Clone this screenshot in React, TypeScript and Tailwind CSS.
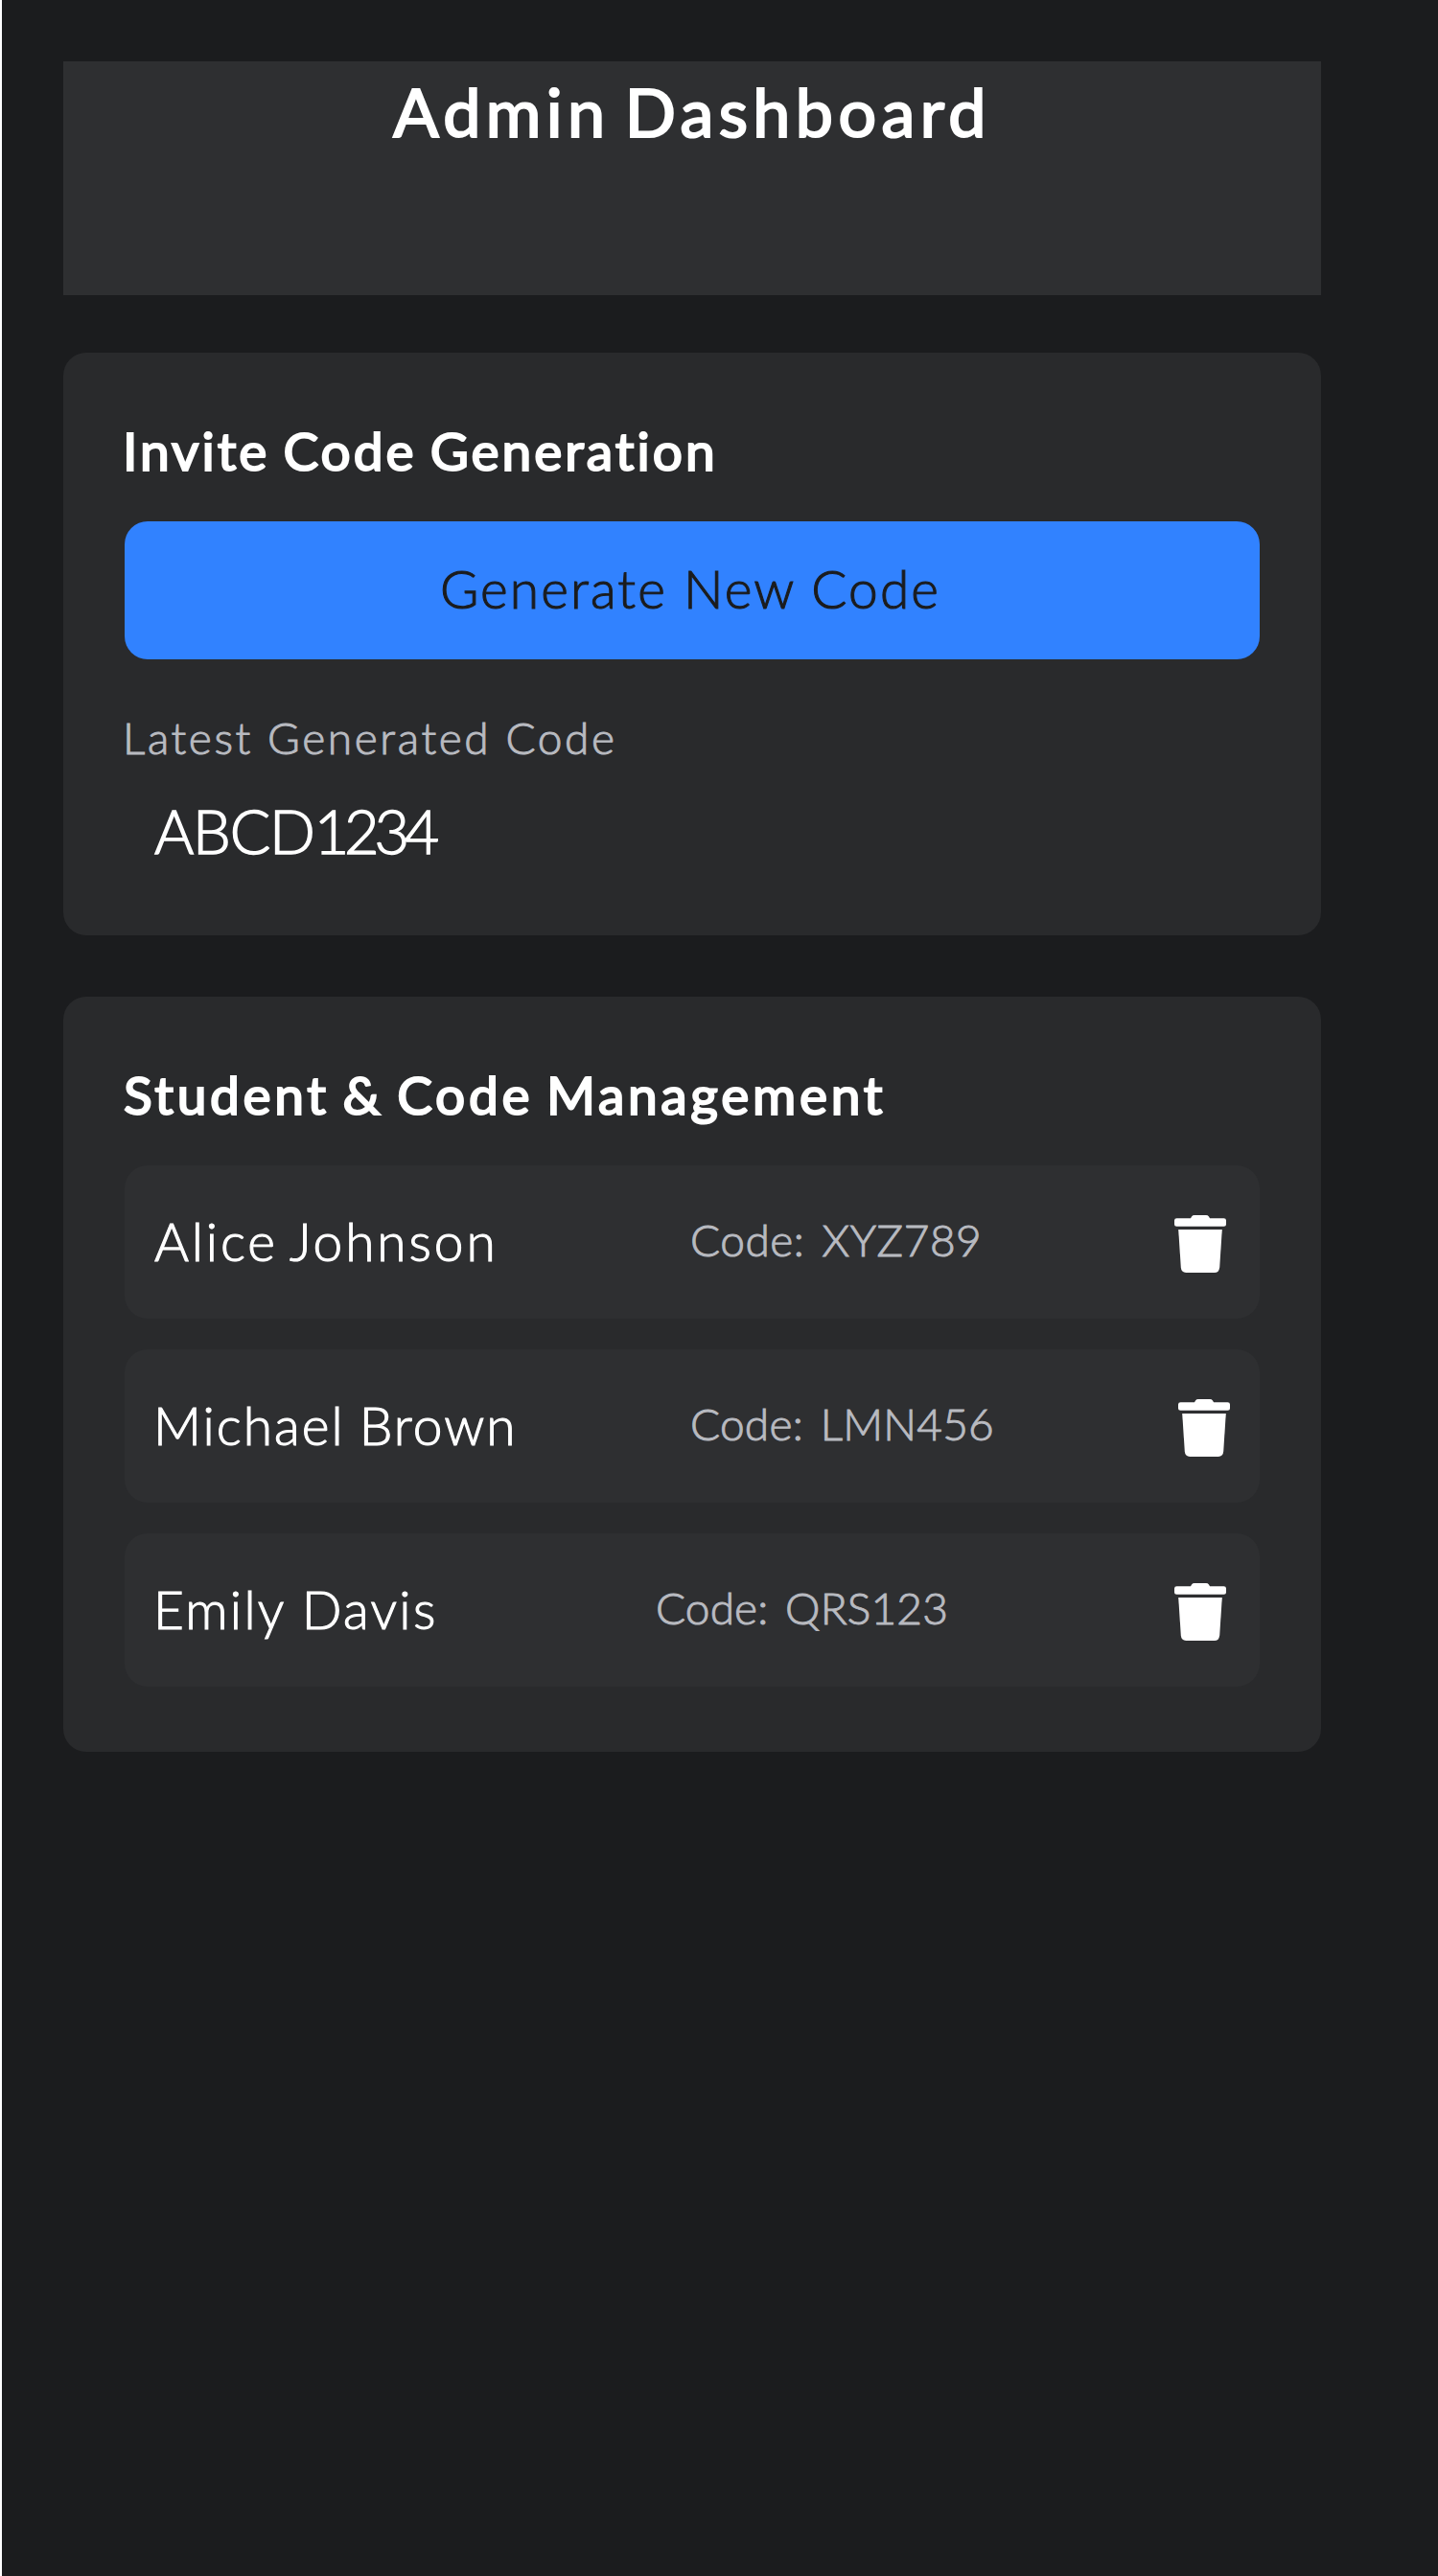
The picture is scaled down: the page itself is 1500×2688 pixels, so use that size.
const students = [
  {
    name: "Alice Johnson",
    code: "Code: XYZ789",
    nameClass: "w-[558px] tracking-[2.9px] [word-spacing:-4px] -indent-px",
    codeClass: "tracking-[0.55px]",
    iconClass: "mr-[3px]",
  },
  {
    name: "Michael Brown",
    code: "Code: LMN456",
    nameClass: "w-[558px] tracking-[2.05px] [word-spacing:-2px] -indent-[2px]",
    codeClass: "tracking-[0.25px]",
    iconClass: "-mr-px",
  },
  {
    name: "Emily Davis",
    code: "Code: QRS123",
    nameClass: "w-[522px] tracking-[2.31px] -indent-[2px]",
    codeClass: "tracking-[0.15px]",
    iconClass: "mr-[3px]",
  },
];

function TrashIcon({ className }: { className: string }) {
  return (
    <svg viewBox="0 0 54 60" className={`h-[60px] w-[54px] ${className}`} fill="currentColor">
      <path d="M17 3.2 L18 1.4 Q19 0 21 0 H33 Q35 0 36 1.4 L37 3.2 H51.5 Q54 3.2 54 5.5 V9.2 Q54 11.7 51.5 11.7 H2.5 Q0 11.7 0 9.2 V5.5 Q0 3.2 2.5 3.2 Z" />
      <path d="M4.2 15 H49.8 L47.2 54.6 Q46.8 60 41.8 60 H12.2 Q7.2 60 6.8 54.6 Z" />
    </svg>
  );
}

function SectionTitle({ className, children }: { className: string; children: string }) {
  return (
    <h2
      className={`mb-9 whitespace-nowrap text-[55px] leading-[76px] font-normal text-white [-webkit-text-stroke:2.1px_currentColor] ${className}`}
    >
      {children}
    </h2>
  );
}

export default function App() {
  return (
    <main className="h-[2688px] w-[1500px] border-l-2 border-white bg-[#1b1c1e] pt-16 pl-16 font-[Lato,sans-serif] font-light text-white">
      <div className="flex w-[1312px] flex-col">
        <header className="h-[244px] bg-[#2e2f31] pt-2 text-center">
          <h1 className="text-[70px] leading-[88px] font-normal tracking-[5.4px] [word-spacing:-8px] [-webkit-text-stroke:2.2px_currentColor]">
            Admin Dashboard
          </h1>
        </header>

        <section className="mt-[60px] h-[608px] rounded-3xl bg-[#292a2c] p-16">
          <SectionTitle className="-ml-[2px] tracking-[3px] [word-spacing:-3px]">
            Invite Code Generation
          </SectionTitle>
          <button className="flex h-36 w-full items-center justify-center rounded-3xl bg-[#3182ff] pr-1 pb-[3px] text-[55px] font-light tracking-[2.09px] text-[#1b1c1e] [-webkit-text-stroke:1.1px_currentColor]">
            Generate New Code
          </button>
          <p className="mt-[52px] -ml-[2px] text-[46px] leading-[60px] tracking-[2.62px] text-[#b8bac0] [-webkit-text-stroke:1px_currentColor]">
            Latest Generated Code
          </p>
          <p className="mt-[27px] pl-[31px] text-[63px] leading-[80px] [-webkit-text-stroke:1.4px_currentColor]">
            <span className="tracking-[-1.2px]">ABCD</span>
            <span className="tracking-[-5.2px]">1234</span>
          </p>
        </section>

        <section className="mt-16 h-[788px] rounded-3xl bg-[#292a2c] p-16">
          <SectionTitle className="-ml-px tracking-[3.7px] [word-spacing:-4px]">
            Student &amp; Code Management
          </SectionTitle>
          <ul className="flex flex-col gap-8">
            {students.map((s) => (
              <li key={s.name} className="flex h-40 items-center rounded-3xl bg-[#2e2f31] px-8">
                <span
                  className={`shrink-0 pb-px text-[55px] whitespace-nowrap [-webkit-text-stroke:1.1px_currentColor] ${s.nameClass}`}
                >
                  {s.name}
                </span>
                <span
                  className={`pb-[5px] text-[46px] whitespace-nowrap text-[#b8bac0] [word-spacing:5px] [-webkit-text-stroke:1px_currentColor] ${s.codeClass}`}
                >
                  {s.code}
                </span>
                <button aria-label={`Delete ${s.name}`} className={`mt-1 ml-auto shrink-0 ${s.iconClass}`}>
                  <TrashIcon className="block" />
                </button>
              </li>
            ))}
          </ul>
        </section>
      </div>
    </main>
  );
}
